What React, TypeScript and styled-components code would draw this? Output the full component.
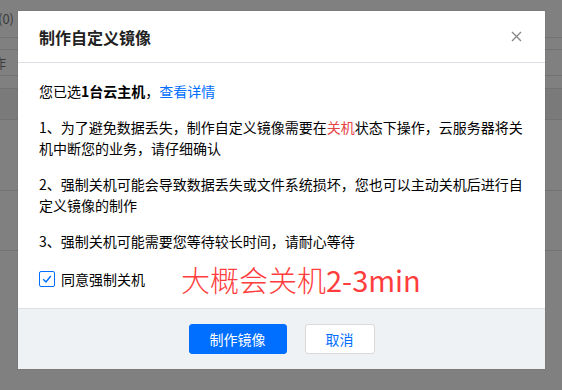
import React, { useState } from 'react';
import styled, { createGlobalStyle } from 'styled-components';

const GlobalStyle = createGlobalStyle`
  html, body {
    margin: 0;
    padding: 0;
    background: #808080;
    font-family: "Noto Sans CJK SC", "Noto Sans", sans-serif;
    overflow: hidden;
  }
`;

const Backdrop = styled.div`
  position: relative;
  width: 562px;
  height: 390px;
  background: #808080;
  overflow: hidden;
`;

const BgTable = styled.div`
  display: flex;
  flex-direction: column;
`;

const BgRow = styled.div<{ h: number; dark?: boolean }>`
  height: ${p => p.h}px;
  border-bottom: 1px solid #727272;
  background: ${p => (p.dark ? '#7a7a7a' : 'transparent')};
  display: flex;
  align-items: center;
  font-size: 13px;
  color: #3c3c3c;
  box-sizing: border-box;
`;

const BgCell = styled.span<{ shift?: number }>`
  margin-left: ${p => p.shift ?? 0}px;
  white-space: nowrap;
`;

const Overlay = styled.div`
  position: absolute;
  inset: 0;
  padding: 11px 0 0 18px;
  box-sizing: border-box;
`;

const Dialog = styled.div`
  width: 527px;
  background: #fff;
  box-shadow: 0 0 0 1px rgba(0, 0, 0, 0.04);
`;

const Header = styled.div`
  height: 51px;
  border-bottom: 1px solid #dcdfe3;
  display: flex;
  align-items: center;
  justify-content: space-between;
  padding: 0 21px;
`;

const Title = styled.h3`
  margin: 0;
  font-size: 16px;
  font-weight: 700;
  color: #222;
`;

const Close = styled.button`
  border: 0;
  background: none;
  padding: 0;
  width: 14px;
  height: 14px;
  margin-right: 1px;
  cursor: pointer;
  display: flex;
  align-items: center;
  justify-content: center;
`;

const Body = styled.div`
  padding: 18px 21px 14px;
  font-size: 14px;
  line-height: 21px;
  color: #000;
`;

const Para = styled.p<{ last?: boolean }>`
  margin: 0 0 ${p => (p.last ? 0 : 15)}px;
`;

const Strong = styled.b`
  font-weight: 700;
`;

const Link = styled.a`
  color: #006eff;
  text-decoration: none;
`;

const Warn = styled.span`
  color: #e54545;
`;

const CheckRow = styled.div`
  display: flex;
  align-items: center;
  height: 30px;
  margin-top: 12px;
`;

const CheckLabel = styled.label`
  display: flex;
  align-items: center;
  gap: 6px;
  cursor: pointer;
`;

const Box = styled.span`
  width: 14px;
  height: 14px;
  border: 1px solid #006eff;
  border-radius: 2px;
  display: flex;
  align-items: center;
  justify-content: center;
  background: #fff;
`;

const Note = styled.span`
  margin-left: 36px;
  font-size: 29px;
  line-height: 30px;
  font-weight: 300;
  color: #ff3d3d;
  white-space: nowrap;
`;

const NoteNum = styled.span`
  font-weight: 400;
`;

const Footer = styled.div`
  background: #eff2f5;
  border-top: 1px solid #dcdfe3;
  padding: 15px 0;
  display: flex;
  justify-content: center;
  gap: 18px;
`;

const Btn = styled.button<{ primary?: boolean }>`
  height: 30px;
  min-width: ${p => (p.primary ? 98 : 70)}px;
  padding: 0 20px;
  box-sizing: border-box;
  border-radius: 3px;
  font-family: inherit;
  font-size: 14px;
  cursor: pointer;
  border: 1px solid ${p => (p.primary ? '#006eff' : '#d9d9d9')};
  background: ${p => (p.primary ? '#006eff' : '#fff')};
  color: ${p => (p.primary ? '#fff' : '#006eff')};
`;

export default function App() {
  const [agree, setAgree] = useState(true);

  return (
    <>
      <GlobalStyle />
      <Backdrop>
        <BgTable>
          <BgRow h={38}><BgCell shift={-2}>(0)</BgCell></BgRow>
          <BgRow h={12} />
          <BgRow h={26}><BgCell shift={-7}>作</BgCell></BgRow>
          <BgRow h={13} />
          <BgRow h={31} dark />
          <BgRow h={71} />
          <BgRow h={60} />
        </BgTable>
        <Overlay>
          <Dialog>
            <Header>
              <Title>制作自定义镜像</Title>
              <Close aria-label="关闭">
                <svg width="11" height="11" viewBox="0 0 11 11">
                  <path d="M1 1L10 10M10 1L1 10" stroke="#888" strokeWidth="1.4" />
                </svg>
              </Close>
            </Header>
            <Body>
              <Para>
                您已选<Strong>1台云主机</Strong>，<Link href="#">查看详情</Link>
              </Para>
              <Para>
                1、为了避免数据丢失，制作自定义镜像需要在<Warn>关机</Warn>状态下操作，云服务器将关机中断您的业务，请仔细确认
              </Para>
              <Para>
                2、强制关机可能会导致数据丢失或文件系统损坏，您也可以主动关机后进行自定义镜像的制作
              </Para>
              <Para last>3、强制关机可能需要您等待较长时间，请耐心等待</Para>
              <CheckRow>
                <CheckLabel onClick={() => setAgree(!agree)}>
                  <Box>
                    {agree && (
                      <svg width="10" height="10" viewBox="0 0 10 10">
                        <path d="M1.2 5.2L4 8L8.8 2" fill="none" stroke="#006eff" strokeWidth="1.5" />
                      </svg>
                    )}
                  </Box>
                  同意强制关机
                </CheckLabel>
                <Note>
                  大概会关机<NoteNum>2-3min</NoteNum>
                </Note>
              </CheckRow>
            </Body>
            <Footer>
              <Btn primary>制作镜像</Btn>
              <Btn>取消</Btn>
            </Footer>
          </Dialog>
        </Overlay>
      </Backdrop>
    </>
  );
}
